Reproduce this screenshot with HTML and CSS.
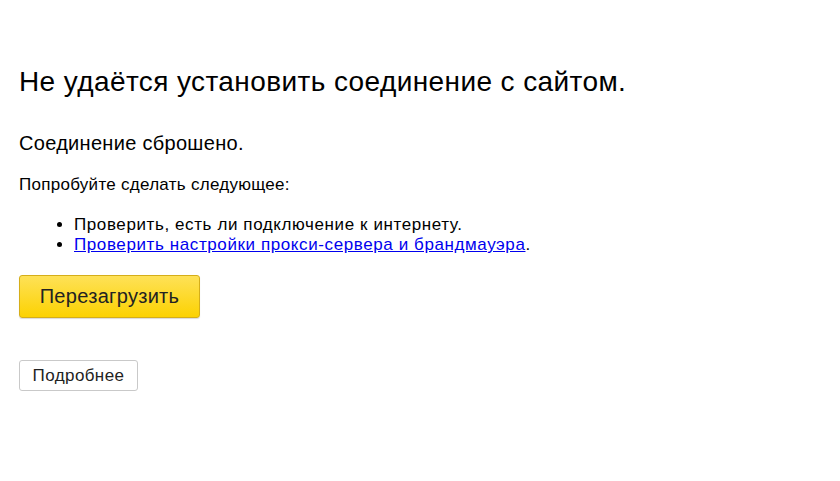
FILE: index.html
```html
<!DOCTYPE html>
<html lang="ru">
<head>
<meta charset="utf-8">
<title>Ошибка</title>
<link rel="stylesheet" href="styles.css">
</head>
<body>
<main class="page">
  <h1 class="title">Не удаётся установить соединение с сайтом.</h1>
  <p class="subtitle">Соединение сброшено.</p>
  <p class="hint">Попробуйте сделать следующее:</p>
  <ul class="tips">
    <li>Проверить, есть ли подключение к интернету.</li>
    <li><a href="#" class="link">Проверить настройки прокси-сервера и брандмауэра</a>.</li>
  </ul>
  <button class="btn-reload">Перезагрузить</button>
  <button class="btn-more">Подробнее</button>
</main>
</body>
</html>
```

FILE: styles.css
```css
html, body {
  margin: 0;
  padding: 0;
  background: #fff;
}
body {
  font-family: "Liberation Sans", Arial, sans-serif;
  color: #000;
}
.page {
  padding: 62px 0 0 19px;
  display: flex;
  flex-direction: column;
  align-items: flex-start;
}
.title {
  font-size: 28px;
  letter-spacing: 0.4px;
  font-weight: normal;
  margin: 0;
  line-height: 40px;
}
.subtitle {
  font-size: 20px;
  letter-spacing: 0.3px;
  margin: 29px 0 0;
  line-height: 24px;
}
.hint {
  font-size: 17px;
  letter-spacing: 0.28px;
  margin: 20px 0 0;
  line-height: 20px;
}
.tips {
  font-size: 17px;
  letter-spacing: 0.6px;
  line-height: 20px;
  margin: 20px 0 0;
  padding-left: 55px;
}
.link {
  color: #0000ee;
}
.btn-reload {
  margin-top: 20px;
  width: 181px;
  height: 43px;
  font-family: inherit;
  font-size: 20px;
  letter-spacing: 0.3px;
  color: #222;
  background: linear-gradient(#fee157, #fcd202);
  border: 1px solid #d5ae19;
  border-radius: 3px;
  box-shadow: 0 1px 1px rgba(0,0,0,0.15);
}
.btn-more {
  margin-top: 42px;
  width: 119px;
  height: 31px;
  font-family: inherit;
  font-size: 17px;
  letter-spacing: 0.4px;
  color: #222;
  background: #fff;
  border: 1px solid #c9c9c9;
  border-radius: 3px;
}
```
